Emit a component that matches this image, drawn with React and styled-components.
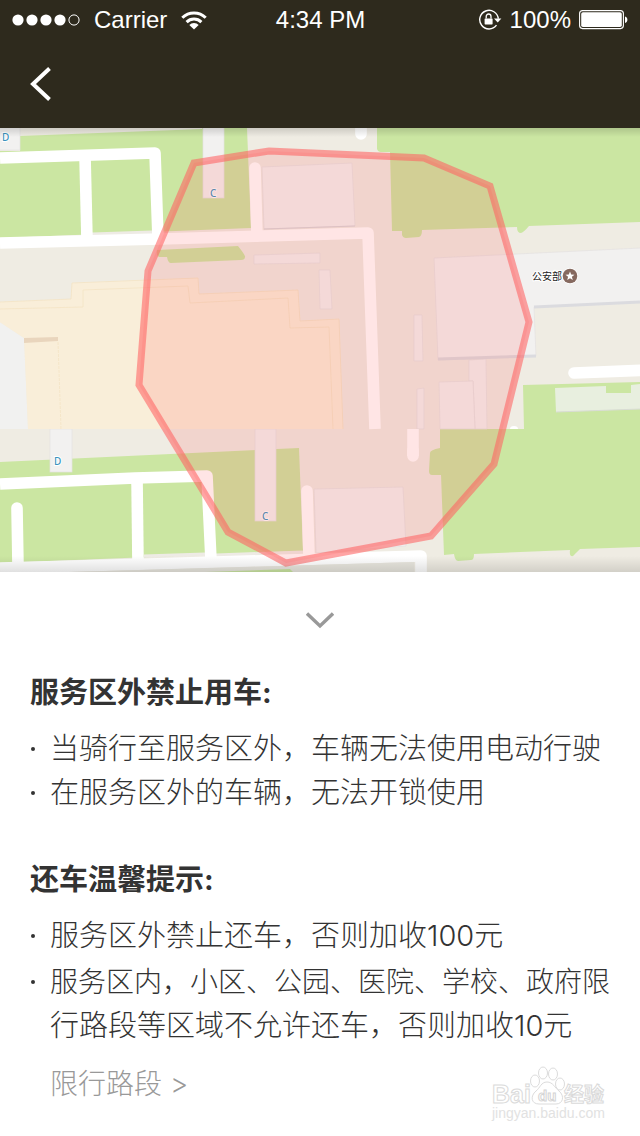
import React from "react";
import styled, { createGlobalStyle } from "styled-components";

const GlobalStyle = createGlobalStyle`
  * {
    box-sizing: border-box;
  }

  body {
    margin: 0;
    background: #fff;
    color: #333;
    font-family: Inter, "Noto Sans CJK SC", sans-serif;
  }
`;

// Status bar icons
const SignalIcon = () => (
  <svg width="68" height="12" viewBox="0 0 68 12" aria-hidden="true">
    {[6, 20, 34, 48].map((x) => (
      <circle key={x} cx={x} cy="6" r="5.6" fill="#fff" />
    ))}
    <circle cx="62" cy="6" r="5.1" fill="none" stroke="#fff" />
  </svg>
);

const WifiIcon = () => (
  <svg width="26" height="19" viewBox="0 0 26 19" aria-hidden="true">
    <g fill="none" stroke="#fff" strokeWidth="3">
      <path d="M1.3 6.7a16.6 16.6 0 0 1 23.4 0" />
      <path d="M5.6 11.1a10.5 10.5 0 0 1 14.8 0" />
    </g>
    <path d="M13 18.6l-4.7-4.7a6.6 6.6 0 0 1 9.4 0z" fill="#fff" />
  </svg>
);

const LockIcon = () => (
  <svg width="24" height="22" viewBox="0 0 24 22" aria-hidden="true">
    <path
      d="M18.5 16.2a9.3 9.3 0 1 1 1.8-6.4"
      fill="none"
      stroke="#fff"
      strokeWidth="1.4"
    />
    <path d="M16 9.6h7.4l-3.7 4z" fill="#fff" />
    <rect x="6.6" y="9.4" width="8" height="6" rx="0.6" fill="#fff" />
    <path
      d="M8.2 9.6V7.4a2.4 2.4 0 0 1 4.8 0v2.2"
      fill="none"
      stroke="#fff"
      strokeWidth="1.3"
    />
  </svg>
);

const BatteryIcon = () => (
  <svg width="50" height="20" viewBox="0 0 50 20" aria-hidden="true">
    <rect x="0.6" y="0.6" width="43.8" height="18" rx="3" fill="none" stroke="#fff" strokeWidth="1.1" />
    <rect x="2.2" y="2.2" width="40.6" height="14.8" rx="1.8" fill="#fff" />
    <path d="M46 6.4c3.2 1 3.2 5.6 0 6.6z" fill="#fff" />
  </svg>
);

// Map with the service area drawn over it
const serviceArea =
  "194,163 269,151 424,158 490,186 529,322 494,464 431,536 286,563 228,532 139,385 148,271";

const ServiceMap = () => (
  <MapSvg viewBox="0 128 640 444" role="img" aria-label="服务区地图">
    <defs>
      <linearGradient id="topShade" x1="0" y1="0" x2="0" y2="1">
        <stop offset="0" stopColor="#000" stopOpacity="0.14" />
        <stop offset="1" stopColor="#000" stopOpacity="0" />
      </linearGradient>
      <linearGradient id="bottomShade" x1="0" y1="0" x2="0" y2="1">
        <stop offset="0" stopColor="#000" stopOpacity="0" />
        <stop offset="1" stopColor="#000" stopOpacity="0.12" />
      </linearGradient>
    </defs>
    <rect y="128" width="640" height="444" fill="#efece3" />

    {/* Parks */}
    <g fill="#cbe6a2">
      <path d="M0 151H20V136L202 129V128H247L251 228L0 238Z" />
      <path d="M377 128L377 149Q378 152 381 152L390 152L392 231L402 231V235Q403 238 406 238L419 237Q422 236 422 230L517 227Q517 233 521 233Q524 232 529 226L640 222V128Z" />
      <path d="M157 250L238 246Q246 256 245 257Q245 260 241 260L171 263Q168 263 167 257L159 257Q156 256 157 250Z" />
      <path d="M0 462L299 448L303 551L0 563Z" />
      <path d="M523 385L640 382V547L580 549Q574 555 573 556Q569 557 570 550L474 554Q474 560 471 560L458 561Q455 561 454 554L444 555L441 475L432 475Q429 475 429 471L430 453Q430 450 440 448V429H524Z" />
    </g>
    <path d="M555 388L606 386V393H631V385L640 384V409L556 412Z" fill="#e8efdf" />
    <path d="M556 412L640 409" stroke="#d9dcd5" />

    {/* Buildings */}
    <g fill="#f2f1f0" stroke="#e4e1e1" strokeWidth="0.7">
      <rect x="-1" y="127" width="21" height="23" />
      <rect x="203" y="127" width="21" height="71" />
      <path d="M262 167L352 163L355 226L264 229Z" />
      <path d="M254 255L320 253V263L254 264Z" />
      <path d="M319 270H330L332 309H320Z" />
      <path d="M414 315H422L423 361H414Z" />
      <path d="M417 389L424 388V429H417Z" />
      <path d="M469 360L486 359L487 429H475L473 381H469Z" />
      <path d="M439 382L473 381L475 429H440Z" />
      <path d="M434 258L641 248V302L534 307L536 356L438 360Z" />
      <rect x="50" y="429" width="22" height="43" />
      <rect x="255" y="429" width="21" height="92" />
      <path d="M314 489L403 487L406 546L316 553Z" />
    </g>
    <g fill="none" stroke="#dbdbdf" strokeWidth="3">
      <path d="M438 359L536 356M534 307L640 302" />
    </g>
    <path d="M264 229L355 226" stroke="#d8d5d8" />
    <path d="M92 234L152 232M144 556L205 554M216 555L303 552" stroke="#eeebe5" strokeWidth="3" />

    {/* Shopping centre */}
    <path d="M0 322L24 338L28 429H0Z" fill="#f1f1f0" />
    <path
      d="M-2 302L71 299L72 283L198 278L199 294L298 290L300 321L339 319L343 429H28L24 338L-2 321Z"
      fill="#f9eed9"
    />
    <g fill="none" stroke="#f4e3c4" strokeWidth="0.8">
      <path d="M0 302L71 299L72 283L198 278L199 294L298 290L300 321L339 319L343 429" />
      <path d="M0 309L83 307V290L188 286L190 303L288 298L290 328L329 327L333 429" />
      <path d="M58 342L61 429" strokeDasharray="3 1" />
    </g>
    <path d="M24 338L58 337V341L24 343Z" fill="#e9d5bd" />

    {/* Roads */}
    <g fill="none" stroke="#fff" strokeWidth="11.6" strokeLinejoin="round">
      <path d="M0 158L155 153L158 238" />
      <path d="M85 156L87 240" />
      <path d="M0 243L160 239L368 233L375 429" />
      <path d="M255 168L257 236M361 120V134M574 373L650 370" strokeLinecap="round" />
      <path d="M413 429V456" />
      <path d="M413 450V456M17 508L18 566M307 491L309 557" strokeLinecap="round" />
      <path d="M0 484L135 478L207 476L211 560" />
      <path d="M137 478L138 564" />
      <path d="M0 568L150 564L421 556V575" />
    </g>
    <path d="M510 429a4 3 0 0 1 8 0z" fill="#fff" />
    <path d="M0 574L414 562V572H0Z" fill="#e9e7df" />
    <path d="M205 572L290 569L293 572Z" fill="#cbe6a2" />

    {/* Place labels */}
    <MapLabel x="2" y="141">D</MapLabel>
    <MapLabel x="210" y="197">C</MapLabel>
    <MapLabel x="54" y="465">D</MapLabel>
    <MapLabel x="262" y="520">C</MapLabel>
    <MapLabel x="532" y="280" $dark>公安部</MapLabel>
    <circle cx="570" cy="276" r="8" fill="#fff" />
    <circle cx="570" cy="276" r="7.3" fill="#86695f" />
    <path
      d="M570 271.4l1.2 3.1 3.3.2-2.6 2.1.9 3.2-2.8-1.8-2.8 1.8.9-3.2-2.6-2.1 3.3-.2z"
      fill="#fff"
    />

    {/* Service area */}
    <polygon points={serviceArea} fill="#ff5050" fillOpacity="0.15" />
    <polygon points={serviceArea} fill="none" stroke="#ff6262" strokeOpacity="0.58" strokeWidth="7" />

    <rect y="128" width="640" height="9" fill="url(#topShade)" />
    <rect y="556" width="640" height="16" fill="url(#bottomShade)" />
  </MapSvg>
);

const Watermark = () => (
  <WatermarkSvg width="118" height="66" viewBox="0 0 118 66" aria-hidden="true">
    <g fill="#fff" stroke="#dcdcdc">
      <ellipse cx="47" cy="25" rx="4.5" ry="6" />
      <ellipse cx="55" cy="17" rx="4.5" ry="6" />
      <ellipse cx="65" cy="18" rx="4.5" ry="6" />
      <ellipse cx="72" cy="28" rx="4.5" ry="6" />
      <path d="M59 26c6 0 8 6 12 9 6 5 4 13-3 13H51c-8 0-9-8-3-13 4-3 5-9 11-9z" />
    </g>
    <g fill="#fff" stroke="#dadada" strokeWidth="1" fontWeight="700">
      <text x="4" y="47" fontSize="25">Bai</text>
      <text x="50" y="45" fontSize="15" stroke="#d4d4d4">du</text>
      <text x="76" y="46" fontSize="20">经验</text>
    </g>
    <text x="4" y="62" fontSize="14" fill="#e2e2e2">jingyan.baidu.com</text>
  </WatermarkSvg>
);

const App = () => {
  return (
    <Page>
      <GlobalStyle />
      <Header>
        <StatusBar>
          <StatusGroup>
            <SignalIcon />
            <span>Carrier</span>
            <WifiIcon />
          </StatusGroup>
          <span>4:34 PM</span>
          <StatusGroup $end>
            <LockIcon />
            <span>100%</span>
            <BatteryIcon />
          </StatusGroup>
        </StatusBar>
        <NavBar>
          <IconButton aria-label="返回">
            <svg width="22" height="34" viewBox="0 0 22 34">
              <path d="M19.5 1.5L3 17l16.5 15.5" fill="none" stroke="#fff" strokeWidth="4" />
            </svg>
          </IconButton>
        </NavBar>
      </Header>

      <ServiceMap />

      <Sheet>
        <CollapseButton aria-label="收起">
          <svg width="28" height="17" viewBox="0 0 28 17">
            <path d="M1 1.5l13 12.5L27 1.5" fill="none" stroke="#999" strokeWidth="3.4" />
          </svg>
        </CollapseButton>

        <Section>
          <Title>服务区外禁止用车:</Title>
          <RuleList>
            <Rule>当骑行至服务区外，车辆无法使用电动行驶</Rule>
            <Rule>在服务区外的车辆，无法开锁使用</Rule>
          </RuleList>
        </Section>

        <Section>
          <Title>还车温馨提示:</Title>
          <RuleList $gap="2px">
            <Rule>服务区外禁止还车，否则加收100元</Rule>
            <Rule>
              <Places>服务区内，小区、公园、医院、学校、政府限</Places>
              <br />
              行路段等区域不允许还车，否则加收10元
            </Rule>
          </RuleList>
          <MoreLink href="#roads">限行路段 &gt;</MoreLink>
        </Section>
      </Sheet>
      <Watermark />
    </Page>
  );
};

// Styled-components for styling
const Page = styled.div`
  position: relative;
  min-height: 100vh;
`;

const Header = styled.header`
  background: #2e2a1d;
  color: #fff;
`;

const StatusBar = styled.div`
  display: grid;
  grid-template-columns: 1fr auto 1fr;
  align-items: center;
  height: 40px;
  padding: 0 11px 0 12px;
  font-family: "Liberation Sans", sans-serif;
  font-size: 24px;
`;

const StatusGroup = styled.div`
  display: flex;
  align-items: center;
  justify-content: ${({ $end }) => ($end ? "flex-end" : "flex-start")};
  gap: ${({ $end }) => ($end ? "8px" : "14px")};
`;

const NavBar = styled.nav`
  display: flex;
  align-items: center;
  height: 88px;
  padding: 0 30px;
`;

const IconButton = styled.button`
  display: flex;
  padding: 0;
  border: none;
  background: transparent;
  cursor: pointer;
`;

const CollapseButton = styled(IconButton)`
  justify-content: center;
  width: 100%;
  padding: 40px 0 42px;
`;

const MapSvg = styled.svg`
  display: block;
  width: 100%;
  height: auto;
`;

const MapLabel = styled.text`
  font-family: "Noto Sans", "Noto Sans CJK SC", sans-serif;
  font-size: 10px;
  font-weight: ${({ $dark }) => ($dark ? 400 : 500)};
  fill: ${({ $dark }) => ($dark ? "#222" : "#3b93bd")};
  stroke: #fff;
  stroke-width: 2px;
  paint-order: stroke;
`;

const Sheet = styled.main`
  padding: 0 30px 20px;
`;

const Section = styled.section`
  & + & {
    margin-top: 43px;
  }
`;

const Title = styled.h2`
  margin: 0 0 12px;
  font-size: 29px;
  font-weight: 700;
  line-height: 44px;
`;

const RuleList = styled.ul`
  display: grid;
  gap: ${({ $gap }) => $gap || 0};
  margin: 0;
  padding: 0;
  list-style: none;
`;

const Rule = styled.li`
  position: relative;
  padding-left: 20px;
  font-size: 29px;
  font-weight: 300;
  line-height: 44px;

  &::before {
    content: "";
    position: absolute;
    top: 20px;
    left: 1px;
    width: 4px;
    height: 4px;
    border-radius: 50%;
    background: #333;
  }
`;

const Places = styled.span`
  font-size: 28px;
  white-space: nowrap;
`;

const MoreLink = styled.a`
  display: inline-block;
  margin: 14px 0 0 20px;
  color: #999;
  font-size: 28px;
  font-weight: 300;
  line-height: 44px;
  text-decoration: none;
`;

const WatermarkSvg = styled.svg`
  position: absolute;
  right: 34px;
  bottom: 14px;
  font-family: "Liberation Sans", "Noto Sans CJK SC", sans-serif;
`;

export default App;
